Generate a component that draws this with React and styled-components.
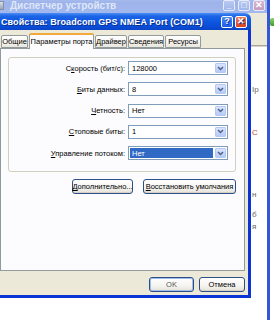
import React from "react";
import styled, { createGlobalStyle } from "styled-components";

const GlobalStyle = createGlobalStyle`
  html, body { margin: 0; padding: 0; }
  body {
    background: #fff;
    font-family: "Liberation Sans", Arial, sans-serif;
  }
`;

const Desktop = styled.div`
  position: relative;
  width: 274px;
  height: 320px;
  overflow: hidden;
  background: #fff;
`;

// background window (device manager)
const BackWindow = styled.div`
  position: absolute;
  left: -10px;
  top: -4px;
  width: 280px;
  height: 340px;
  box-sizing: border-box;
  border-right: 3px solid #3556d6;
  background: #fff;
  display: flex;
  flex-direction: column;
`;

const BackTitle = styled.div`
  height: 17px;
  flex: none;
  display: flex;
  align-items: center;
  padding: 2px 2px 0 6px;
  box-sizing: border-box;
  background: linear-gradient(to bottom, #b4c4ee 0%, #9db3ea 40%, #a3b8ec 100%);
  color: #dfe7f8;
  font-weight: bold;
  font-size: 10px;
  gap: 6px;
`;

const BackIcon = styled.div`
  width: 8px;
  height: 9px;
  background: linear-gradient(#d9dde6, #9aa5bc);
  border: 1px solid #8390aa;
  box-sizing: border-box;
`;

const CaptionButtons = styled.div`
  margin-left: auto;
  display: flex;
  gap: ${(p) => p.$gap || 3}px;
`;

const CapButton = styled.div`
  width: ${(p) => p.$w || 12}px;
  height: ${(p) => p.$h || 11}px;
  box-sizing: border-box;
  border: 1px solid ${(p) => p.$edge || "#e6ecfb"};
  border-radius: 2px;
  background: ${(p) => p.$bg};
  display: flex;
  align-items: center;
  justify-content: center;
  color: #fff;
  font-weight: bold;
  font-size: 9px;
  line-height: 1;
`;

const MenuBar = styled.div`
  height: 32px;
  flex: none;
  background: #ece9d8;
  border-bottom: 1px solid #aca899;
`;

const BackTree = styled.div`
  flex: 1;
  display: flex;
  flex-direction: column;
  padding: 6px 0 0 262px;
  border-top: 1px solid #d6d3c6;
`;

const Fragment = styled.div`
  height: 10px;
  margin-top: ${(p) => p.$top}px;
  font-size: 8px;
  line-height: 10px;
  color: ${(p) => p.$color || "#666"};
  white-space: nowrap;
`;

const GreenMark = styled.div`
  position: absolute;
  left: 270px;
  top: 18px;
  width: 6px;
  height: 8px;
  background: linear-gradient(#8fd46a, #3e9a2a);
  border-radius: 2px;
`;

// foreground dialog
const Dialog = styled.div`
  position: absolute;
  left: -7px;
  top: 13px;
  width: 258px;
  height: 285px;
  display: flex;
  flex-direction: column;
`;

const TitleBar = styled.div`
  height: 17px;
  flex: none;
  display: flex;
  align-items: center;
  padding: 0 4px 0 8px;
  box-sizing: border-box;
  border-radius: 6px 6px 0 0;
  background: linear-gradient(
    to bottom,
    #4a8ef5 0%,
    #1d64e6 18%,
    #0b55e0 55%,
    #0a4bd4 85%,
    #0c44c4 100%
  );
  color: #fff;
  font-weight: bold;
  font-size: 9px;
  letter-spacing: 0.1px;
  text-shadow: 1px 1px 0 #0a2f8e;
  white-space: nowrap;
`;

const Body = styled.div`
  flex: 1;
  display: flex;
  flex-direction: column;
  padding: 3px 3px 0 4px;
  background: #ece9d8;
  border: 3px solid #0a35d2;
  border-top: none;
  box-sizing: border-box;
`;

const TabRow = styled.div`
  height: 15px;
  flex: none;
  display: flex;
  align-items: flex-end;
  padding-left: 1px;
  gap: 1px;
  position: relative;
  z-index: 1;
`;

const Tab = styled.div`
  width: ${(p) => p.$w}px;
  height: ${(p) => (p.$active ? 16 : 13)}px;
  box-sizing: border-box;
  border: 1px solid #919b9c;
  border-bottom: ${(p) => (p.$active ? "none" : "1px solid #919b9c")};
  border-top: ${(p) => (p.$active ? "2px solid #f2a93b" : "1px solid #919b9c")};
  border-radius: 2px 2px 0 0;
  margin-bottom: ${(p) => (p.$active ? -1 : 0)}px;
  background: ${(p) =>
    p.$active ? "#fcfcfe" : "linear-gradient(#ffffff, #f4f3ee 60%, #e8e6dc)"};
  font-size: 7.5px;
  line-height: 1;
  display: flex;
  align-items: center;
  justify-content: center;
  color: #000;
  white-space: nowrap;
`;

const Panel = styled.div`
  height: 223px;
  flex: none;
  box-sizing: border-box;
  border: 1px solid #919b9c;
  background: #fcfcfe;
  padding: 8px 8px 0 7px;
  display: flex;
  flex-direction: column;
`;

const Frame = styled.div`
  border: 1px solid #d0d0bf;
  border-radius: 3px;
  padding: 3px 7px 11px 0;
  display: grid;
  grid-template-columns: 1fr 100px;
  column-gap: 3px;
  row-gap: 7.25px;
`;

const Label = styled.div`
  align-self: center;
  text-align: right;
  font-size: 7.5px;
  color: #000;
  white-space: nowrap;
`;

const Key = styled.span`
  text-decoration: underline;
`;

const Combo = styled.div`
  height: 14px;
  box-sizing: border-box;
  border: 1px solid #7f9db9;
  background: #fff;
  display: flex;
  align-items: center;
  padding: 1px;
  gap: 2px;
`;

const ComboText = styled.div`
  flex: 1;
  height: 10px;
  display: flex;
  align-items: center;
  padding-left: 2px;
  font-size: 7.5px;
  color: ${(p) => (p.$selected ? "#fff" : "#000")};
  background: ${(p) => (p.$selected ? "#316ac5" : "transparent")};
`;

const ComboArrow = styled.div`
  width: 11px;
  height: 10px;
  box-sizing: border-box;
  border: 1px solid #b5c8f3;
  border-radius: 1px;
  background: linear-gradient(#dbe5fc, #c2d3fa 60%, #b7cbf7);
  display: flex;
  align-items: center;
  justify-content: center;
`;

const ButtonRow = styled.div`
  display: flex;
  justify-content: flex-end;
  gap: ${(p) => p.$gap}px;
  margin-top: ${(p) => p.$top || 0}px;
`;

const Button = styled.div`
  width: ${(p) => p.$w}px;
  height: 15px;
  box-sizing: border-box;
  border: 1px solid #2c4f8a;
  border-radius: 3px;
  background: linear-gradient(#ffffff, #f5f4f0 60%, #e3e0d6);
  box-shadow: ${(p) =>
    p.$default ? "inset 0 0 0 1px #9fbdec" : "inset 0 -1px 0 #d6d0c5"};
  font-size: 7.5px;
  color: ${(p) => (p.$muted ? "#555" : "#000")};
  display: flex;
  align-items: center;
  justify-content: center;
  white-space: nowrap;
`;

const Footer = styled.div`
  display: flex;
  justify-content: flex-end;
  gap: 5px;
  padding-top: 6px;
`;

const Chevron = () => (
  <svg width="7" height="5" viewBox="0 0 7 5">
    <path d="M1 1 L3.5 3.5 L6 1" fill="none" stroke="#4d6185" strokeWidth="1.5" />
  </svg>
);

const rows = [
  { key: "С", rest: "корость (бит/с):", value: "128000" },
  { key: "Б", rest: "иты данных:", value: "8" },
  { key: "Ч", rest: "етность:", value: "Нет" },
  { key: "С", rest: "топовые биты:", value: "1" },
  { key: "У", rest: "правление потоком:", value: "Нет", selected: true },
];

const tabs = [
  { name: "Общие", w: 27 },
  { name: "Параметры порта", w: 65, active: true },
  { name: "Драйвер", w: 32 },
  { name: "Сведения", w: 36 },
  { name: "Ресурсы", w: 36 },
];

export default function App() {
  return (
    <>
      <GlobalStyle />
      <Desktop>
        <BackWindow>
          <BackTitle>
            <BackIcon />
            Диспетчер устройств
            <CaptionButtons $gap={3}>
              <CapButton $bg="linear-gradient(#b9c9f1, #9fb5ea)">_</CapButton>
              <CapButton $bg="linear-gradient(#b9c9f1, #9fb5ea)">□</CapButton>
              <CapButton $bg="linear-gradient(#d8b8d0, #c49cbc)">✕</CapButton>
            </CaptionButtons>
          </BackTitle>
          <MenuBar />
          <BackTree>
            <Fragment $top={32}>Ip</Fragment>
            <Fragment $top={33} $color="#c0502e">C</Fragment>
            <Fragment $top={52}>н</Fragment>
            <Fragment $top={10}>б</Fragment>
            <Fragment $top={2}>я</Fragment>
          </BackTree>
        </BackWindow>
        <GreenMark />

        <Dialog>
          <TitleBar>
            Свойства: Broadcom GPS NMEA Port (COM1)
            <CaptionButtons $gap={2}>
              <CapButton $w={12} $h={12} $edge="#ffffff" $bg="linear-gradient(#4f8cf7, #1e5ce8)">
                ?
              </CapButton>
              <CapButton $w={12} $h={12} $edge="#ffffff" $bg="linear-gradient(#ee7a57, #d9441f)">
                ✕
              </CapButton>
            </CaptionButtons>
          </TitleBar>
          <Body>
            <TabRow>
              {tabs.map((t) => (
                <Tab key={t.name} $w={t.w} $active={t.active}>
                  {t.name}
                </Tab>
              ))}
            </TabRow>
            <Panel>
              <Frame>
                {rows.map((r, i) => (
                  <React.Fragment key={i}>
                    <Label>
                      {i === 0 ? (
                        <>
                          С<Key>к</Key>орость (бит/с):
                        </>
                      ) : (
                        <>
                          <Key>{r.key}</Key>
                          {r.rest}
                        </>
                      )}
                    </Label>
                    <Combo>
                      <ComboText $selected={r.selected}>{r.value}</ComboText>
                      <ComboArrow>
                        <Chevron />
                      </ComboArrow>
                    </Combo>
                  </React.Fragment>
                ))}
              </Frame>
              <ButtonRow $gap={10} $top={7}>
                <Button $w={61}>
                  <Key>Д</Key>ополнительно...
                </Button>
                <Button $w={93}>
                  <Key>В</Key>осстановить умолчания
                </Button>
              </ButtonRow>
            </Panel>
            <Footer>
              <Button $w={45} $default $muted>
                OK
              </Button>
              <Button $w={46}>Отмена</Button>
            </Footer>
          </Body>
        </Dialog>
      </Desktop>
    </>
  );
}
